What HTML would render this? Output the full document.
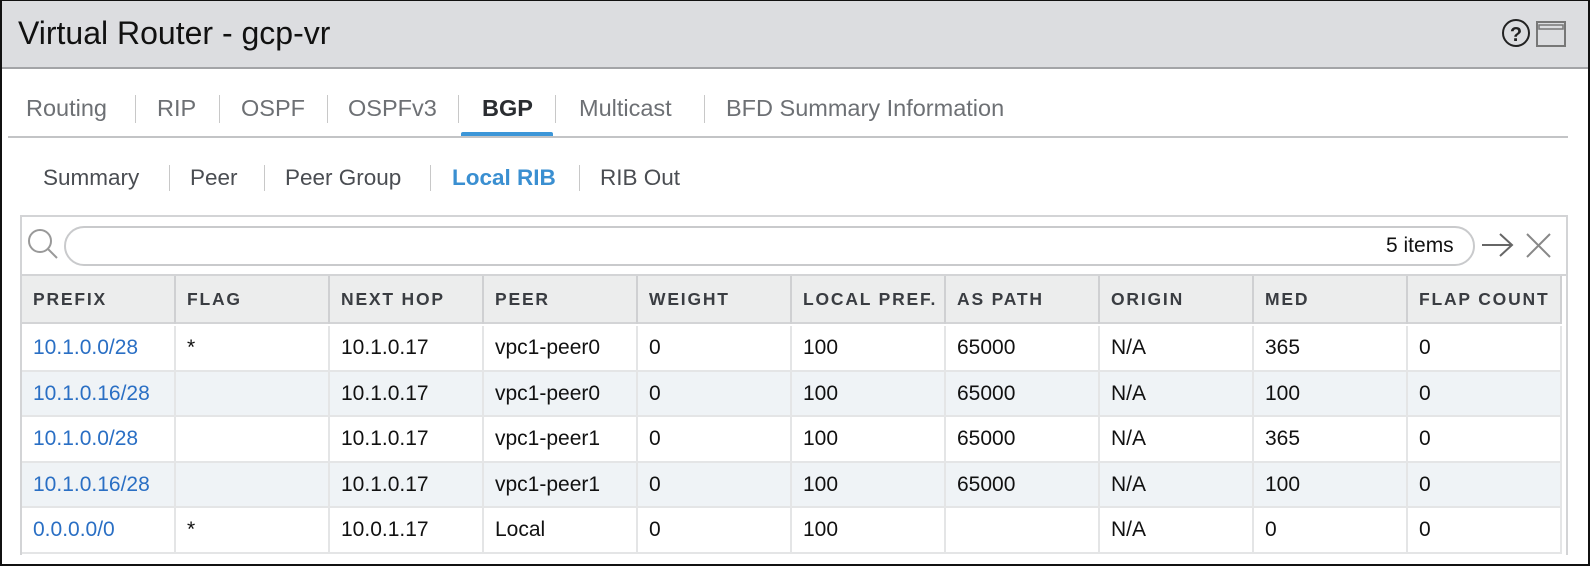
<!DOCTYPE html>
<html><head><meta charset="utf-8"><style>
*{margin:0;padding:0;box-sizing:border-box}
body{width:1590px;height:566px;overflow:hidden;background:#fff;font-family:"Liberation Sans",sans-serif;position:relative}
.frame{position:absolute;left:0;top:0;width:1590px;height:566px;border:2px solid #111;border-top:1px solid #111}
.hdr{position:absolute;left:2px;top:1px;width:1586px;height:68px;background:#dcdde0;border-bottom:2px solid #a3a4a7}
.title{position:absolute;left:16px;top:14px;font-size:32px;color:#111}
.t{position:absolute;font-size:23.5px;color:#6d7074;top:95px}
.sep{position:absolute;width:1px;background:#c8c8c8}
.st{position:absolute;font-size:22.5px;color:#4a4d52;top:165px}
.tbl{position:absolute;left:20px;top:215px;width:1548px;height:340px;border:2px solid #d3d4d6;border-bottom:none}
.cell{position:absolute;font-size:21px;color:#111}
.hc{position:absolute;font-size:17.5px;font-weight:bold;letter-spacing:1.8px;color:#3a3d42;top:289px}
</style></head><body>
<div class="hdr"><div class="title">Virtual Router - gcp-vr</div>
<svg style="position:absolute;left:1498px;top:16px" width="70" height="34">
<circle cx="16" cy="16" r="13" fill="none" stroke="#222" stroke-width="2"/>
<text x="16" y="24" font-size="20" font-weight="bold" text-anchor="middle" font-family="Liberation Sans" fill="#222">?</text>
<rect x="37" y="5" width="28" height="24" fill="none" stroke="#777" stroke-width="2"/>
<rect x="39" y="8" width="24" height="4" fill="none" stroke="#777" stroke-width="1.5"/>
</svg></div>
<div class="frame"></div>

<div class="t" style="left:26px">Routing</div><div class="sep" style="left:135px;top:95px;height:28px"></div>
<div class="t" style="left:157px">RIP</div><div class="sep" style="left:219px;top:95px;height:28px"></div>
<div class="t" style="left:241px">OSPF</div><div class="sep" style="left:327px;top:95px;height:28px"></div>
<div class="t" style="left:348px">OSPFv3</div><div class="sep" style="left:458px;top:95px;height:28px"></div>
<div class="t" style="left:482px;color:#2a2d31;font-weight:bold">BGP</div><div class="sep" style="left:555px;top:95px;height:28px"></div>
<div class="t" style="left:579px">Multicast</div><div class="sep" style="left:704px;top:95px;height:28px"></div>
<div class="t" style="left:726px">BFD Summary Information</div>
<div style="position:absolute;left:8px;top:136px;width:1560px;height:2px;background:#c3c4c6"></div>
<div style="position:absolute;left:461px;top:132px;width:92px;height:4px;background:#3c96d8;border-radius:2px 2px 0 0"></div>

<div class="st" style="left:43px">Summary</div><div class="sep" style="left:169px;top:165px;height:26px"></div>
<div class="st" style="left:190px">Peer</div><div class="sep" style="left:264px;top:165px;height:26px"></div>
<div class="st" style="left:285px">Peer Group</div><div class="sep" style="left:430px;top:165px;height:26px"></div>
<div class="st" style="left:452px;color:#3a8fd1;font-weight:bold">Local RIB</div><div class="sep" style="left:579px;top:165px;height:26px"></div>
<div class="st" style="left:600px">RIB Out</div>

<div class="tbl"></div>
<svg style="position:absolute;left:26px;top:227px" width="36" height="36"><circle cx="14" cy="14" r="11" fill="none" stroke="#999" stroke-width="2"/><line x1="22" y1="22" x2="31" y2="31" stroke="#999" stroke-width="2"/></svg>
<div style="position:absolute;left:64px;top:226px;width:1411px;height:40px;border:2px solid #c9cacc;border-radius:20px"></div>
<div class="cell" style="left:1386px;top:234px">5 items</div>
<svg style="position:absolute;left:1480px;top:230px" width="75" height="32"><path d="M2 15H32M20 4L32 15L20 26" fill="none" stroke="#666" stroke-width="2"/><path d="M47 4L70 27M70 4L47 27" stroke="#888" stroke-width="2"/></svg>
<div style="position:absolute;left:22px;top:274px;width:1544px;height:2px;background:#d3d4d6"></div>
<div style="position:absolute;left:22px;top:276px;width:1540px;height:48px;background:#eceded;border-bottom:2px solid #d3d4d6"></div>
<div style="position:absolute;left:22px;top:371px;width:1540px;height:45px;background:#eff3f6"></div>
<div style="position:absolute;left:22px;top:462px;width:1540px;height:45px;background:#eff3f6"></div>
<div id="g"></div>
<script>
var cols=["PREFIX","FLAG","NEXT HOP","PEER","WEIGHT","LOCAL PREF.","AS PATH","ORIGIN","MED","FLAP COUNT"];
var rows=[["10.1.0.0/28","*","10.1.0.17","vpc1-peer0","0","100","65000","N/A","365","0"],
["10.1.0.16/28","","10.1.0.17","vpc1-peer0","0","100","65000","N/A","100","0"],
["10.1.0.0/28","","10.1.0.17","vpc1-peer1","0","100","65000","N/A","365","0"],
["10.1.0.16/28","","10.1.0.17","vpc1-peer1","0","100","65000","N/A","100","0"],
["0.0.0.0/0","*","10.0.1.17","Local","0","100","","N/A","0","0"]];
var h="";
for(var i=0;i<10;i++){var x=22+i*154;
h+='<div class="hc" style="left:'+(x+11)+'px">'+cols[i]+'</div>';
h+='<div class="sep" style="left:'+(x+152)+'px;top:276px;height:48px;width:2px;background:#cfd0d2"></div>';
h+='<div class="sep" style="left:'+(x+152)+'px;top:326px;height:228px;width:2px;background:#e4e5e6"></div>';
for(var r=0;r<5;r++){var y=326+r*45.5;
h+='<div class="cell" style="left:'+(x+11)+'px;top:'+(y+10)+'px;'+(i==0?'color:#2a6fc4':'')+'">'+rows[r][i]+'</div>';}}
for(var r=1;r<=5;r++)h+='<div style="position:absolute;left:22px;top:'+Math.round(324+r*45.5)+'px;width:1540px;height:2px;background:#e4e5e6"></div>';
document.getElementById("g").innerHTML=h;
</script>
</body></html>
